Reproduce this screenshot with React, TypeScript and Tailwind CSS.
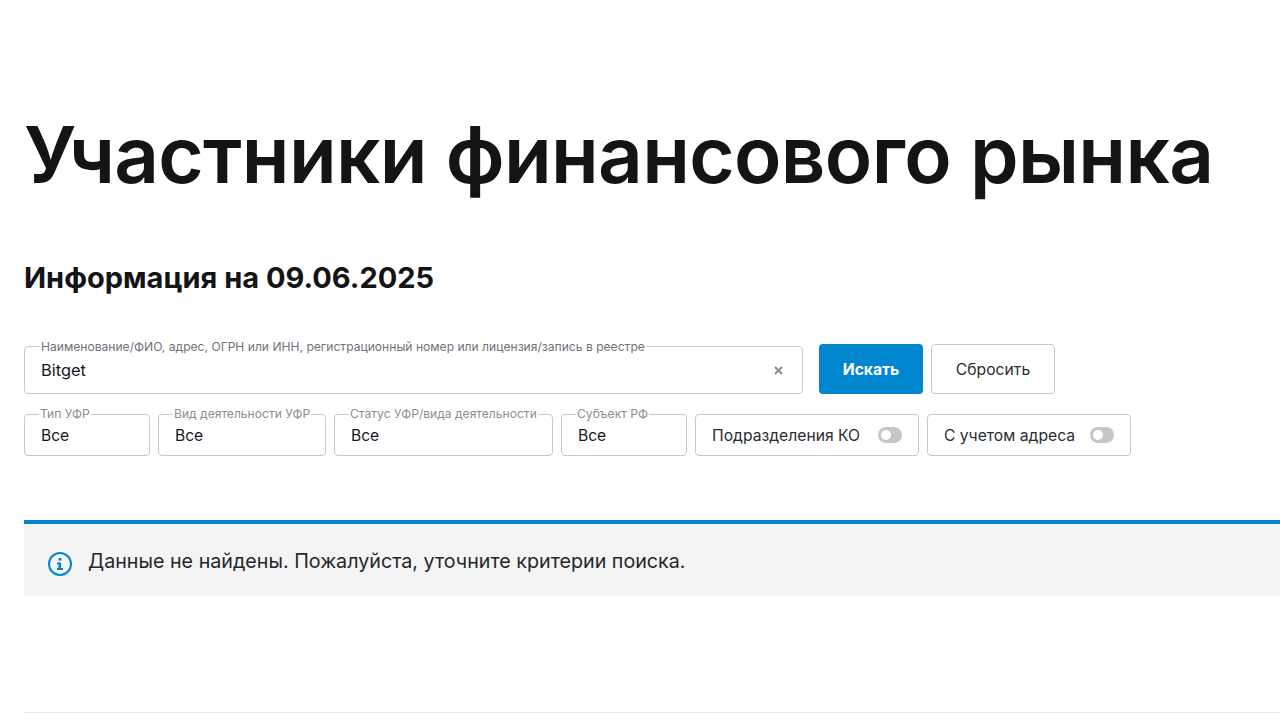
const font = "font-['Inter','Noto_Sans',sans-serif]";

function Field({ label, value, width }: { label: string; value: string; width: string }) {
  return (
    <div className={`relative h-[42px] rounded-[4px] border border-[#c6c8cc] pl-[16px] flex items-center pt-[2px] ${width}`}>
      <span className="absolute top-[-8px] left-[14px] bg-white px-[1px] text-[12.1px] leading-[14px] text-[#8b8e95] whitespace-nowrap">{label}</span>
      <span className="text-[15.6px] text-[#16181c]">{value}</span>
    </div>
  );
}

function Toggle({ label, width }: { label: string; width: string }) {
  return (
    <div className={`h-[42px] rounded-[4px] border border-[#c6c8cc] pl-[16px] pr-[16px] flex items-center justify-between ${width}`}>
      <span className="pt-[2px] text-[15.7px] text-[#2a2c30] whitespace-nowrap">{label}</span>
      <span className="w-[24px] h-[16px] rounded-full bg-[#c4c6ca] flex items-center pl-[3px]">
        <span className="w-[10px] h-[10px] rounded-full bg-white" />
      </span>
    </div>
  );
}

export default function App() {
  return (
    <div className={`${font} w-[1280px] h-[720px] overflow-hidden bg-white pl-[24px] pt-[110px]`}>
      {/* Title */}
      <h1 className="text-[78px] leading-[90px] font-semibold tracking-[-0.68px] text-[#121416] whitespace-nowrap">Участники финансового рынка</h1>
      <h2 className="mt-[61px] text-[29px] leading-[34px] font-bold text-[#121416]">Информация на 09.06.2025</h2>

      {/* Search */}
      <div className="mt-[49px] flex items-end">
        <div className="relative w-[779px] h-[48px] rounded-[4px] border border-[#c6c8cc] pl-[16px] pr-[19px] flex items-center justify-between">
          <span className="absolute top-[-7px] left-[15px] bg-white px-[1px] text-[12.1px] leading-[14px] text-[#6f7278] whitespace-nowrap">Наименование/ФИО, адрес, ОГРН или ИНН, регистрационный номер или лицензия/запись в реестре</span>
          <span className="pt-[1px] text-[16.4px] text-[#16181c]">Bitget</span>
          <svg width="9" height="9" viewBox="0 0 9 9" className="text-[#8b8e95]">
            <path d="M1 1l7 7M8 1L1 8" stroke="currentColor" strokeWidth="2" />
          </svg>
        </div>
        <button className="ml-[16px] w-[104px] h-[50px] pt-[2px] rounded-[4px] bg-[#0086cf] text-white text-[15.6px] font-bold">Искать</button>
        <button className="ml-[8px] w-[124px] h-[50px] pt-[2px] rounded-[4px] border border-[#c6c8cc] text-[15.7px] text-[#2a2c30]">Сбросить</button>
      </div>

      {/* Filters */}
      <div className="mt-[20px] flex gap-[8px]">
        <Field label="Тип УФР" value="Все" width="w-[126px]" />
        <Field label="Вид деятельности УФР" value="Все" width="w-[168px]" />
        <Field label="Статус УФР/вида деятельности" value="Все" width="w-[219px]" />
        <Field label="Субъект РФ" value="Все" width="w-[126px]" />
        <Toggle label="Подразделения КО" width="w-[224px]" />
        <Toggle label="С учетом адреса" width="w-[204px]" />
      </div>

      {/* Notice */}
      <div className="mt-[64px] h-[76px] border-t-4 border-[#0086cf] bg-[#f4f4f4] flex items-center pl-[24px] pt-[2px]">
        <svg width="24" height="24" viewBox="0 0 24 24" fill="none" className="mt-[5px] text-[#0086cf]">
          <circle cx="12" cy="12" r="11" stroke="currentColor" strokeWidth="2" />
          <rect x="10.5" y="6" width="3" height="2.6" fill="currentColor" />
          <path d="M9 10.5h4V16h2v2H9v-2h1.5v-3.5H9z" fill="currentColor" />
        </svg>
        <span className="ml-[16px] pt-[2px] text-[19.7px] text-[#24262b] whitespace-nowrap">Данные не найдены. Пожалуйста, уточните критерии поиска.</span>
      </div>

      <div className="mt-[116px] h-[1px] bg-[#e8e8e8]" />
    </div>
  );
}
